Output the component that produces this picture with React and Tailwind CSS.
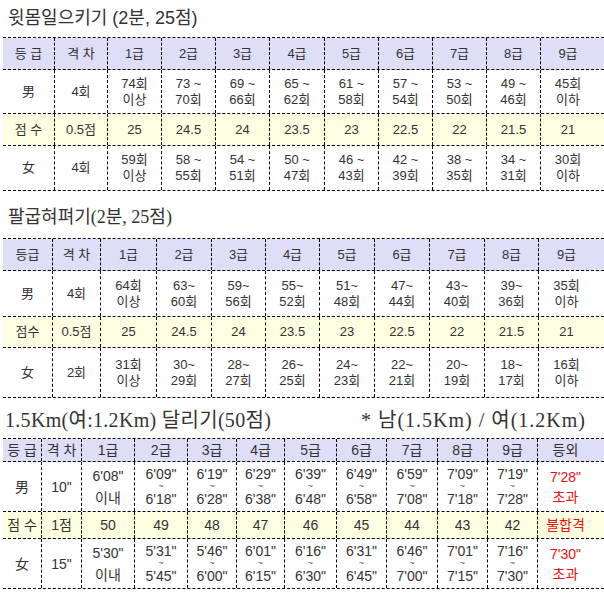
import React from 'react';

const HEAD_BG = 'bg-[#dedef7]';
const SCORE_BG = 'bg-[#fdfde2]';

// one cell: string, array of lines, or {lines, red, tilde}
const Cell = ({ value, last, big }) => {
    const v = typeof value === 'object' && !Array.isArray(value) ? value : { lines: value };
    const lines = Array.isArray(v.lines) ? v.lines : [v.lines];
    let lead = big ? 'leading-[22px]' : 'leading-[16px]';
    if (v.red) lead = 'leading-[20px]';

    return (
        <div
            className={
                'flex flex-col items-center justify-center text-center whitespace-nowrap ' +
                (last ? '' : 'border-r border-dashed border-black ') +
                (v.red ? 'text-[#f01010]' : 'text-[#333]')
            }
        >
            {v.tilde ? (
                <>
                    <span className="leading-[16px]">{lines[0]}</span>
                    <span className="leading-[9px] text-[9px] text-[#555]">~</span>
                    <span className="leading-[16px]">{lines[1]}</span>
                </>
            ) : (
                lines.map((l, i) => (
                    <span key={i} className={lead}>{l}</span>
                ))
            )}
        </div>
    );
};

const Table = ({ cols, rows, big }) => (
    <div className={'ml-[3px] border-t border-dashed border-black ' + (big ? 'text-[14px]' : 'text-[13px]')}>
        {rows.map((row, i) => (
            <div key={i} className={'grid border-b border-dashed border-black ' + cols + ' ' + row.h + ' ' + (row.bg || '')}>
                {row.cells.map((c, j) => (
                    <Cell key={j} value={c} last={j === row.cells.length - 1} big={big} />
                ))}
            </div>
        ))}
    </div>
);

const grades = ['1급', '2급', '3급', '4급', '5급', '6급', '7급', '8급', '9급'];

const situpRows = [
    { h: 'h-[32px]', bg: HEAD_BG, cells: ['등 급', '격 차', ...grades] },
    {
        h: 'h-[44px]',
        cells: ['男', '4회', ['74회', '이상'], ['73 ~', '70회'], ['69 ~', '66회'], ['65 ~', '62회'], ['61 ~', '58회'],
            ['57 ~', '54회'], ['53 ~', '50회'], ['49 ~', '46회'], ['45회', '이하']],
    },
    { h: 'h-[32px]', bg: SCORE_BG, cells: ['점 수', '0.5점', '25', '24.5', '24', '23.5', '23', '22.5', '22', '21.5', '21'] },
    {
        h: 'h-[45px]',
        cells: ['女', '4회', ['59회', '이상'], ['58 ~', '55회'], ['54 ~', '51회'], ['50 ~', '47회'], ['46 ~', '43회'],
            ['42 ~', '39회'], ['38 ~', '35회'], ['34 ~', '31회'], ['30회', '이하']],
    },
];

const pushupRows = [
    { h: 'h-[32px]', bg: HEAD_BG, cells: ['등급', '격 차', ...grades] },
    {
        h: 'h-[46px]',
        cells: ['男', '4회', ['64회', '이상'], ['63~', '60회'], ['59~', '56회'], ['55~', '52회'], ['51~', '48회'],
            ['47~', '44회'], ['43~', '40회'], ['39~', '36회'], ['35회', '이하']],
    },
    { h: 'h-[31px]', bg: SCORE_BG, cells: ['점수', '0.5점', '25', '24.5', '24', '23.5', '23', '22.5', '22', '21.5', '21'] },
    {
        h: 'h-[50px]',
        cells: ['女', '2회', ['31회', '이상'], ['30~', '29회'], ['28~', '27회'], ['26~', '25회'], ['24~', '23회'],
            ['22~', '21회'], ['20~', '19회'], ['18~', '17회'], ['16회', '이하']],
    },
];

const t = (a, b) => ({ lines: [a, b], tilde: true });

const runRows = [
    { h: 'h-[23px]', bg: HEAD_BG, cells: ['등 급', '격 차', ...grades, '등외'] },
    {
        h: 'h-[50px]',
        cells: ['男', '10"', ['6\'08"', '이내'], t('6\'09"', '6\'18"'), t('6\'19"', '6\'28"'), t('6\'29"', '6\'38"'),
            t('6\'39"', '6\'48"'), t('6\'49"', '6\'58"'), t('6\'59"', '7\'08"'), t('7\'09"', '7\'18"'),
            t('7\'19"', '7\'28"'), { lines: ['7\'28"', '초과'], red: true }],
    },
    {
        h: 'h-[27px]',
        bg: SCORE_BG,
        cells: ['점 수', '1점', '50', '49', '48', '47', '46', '45', '44', '43', '42', { lines: '불합격', red: true }],
    },
    {
        h: 'h-[50px]',
        cells: ['女', '15"', ['5\'30"', '이내'], t('5\'31"', '5\'45"'), t('5\'46"', '6\'00"'), t('6\'01"', '6\'15"'),
            t('6\'16"', '6\'30"'), t('6\'31"', '6\'45"'), t('6\'46"', '7\'00"'), t('7\'01"', '7\'15"'),
            t('7\'16"', '7\'30"'), { lines: ['7\'30"', '초과'], red: true }],
    },
];

export default function App() {
    return (
        <div className="w-[604px] h-[594px] bg-white overflow-hidden font-['Liberation_Sans','Noto_Sans_CJK_KR',sans-serif]">
            <div className="h-[37px] flex items-center pl-[8px] text-[18px] text-[#333]">
                윗몸일으키기 (2분, 25점)
            </div>
            <Table
                cols="grid-cols-[52px_53px_54px_54px_54px_55px_54px_54px_54px_54px_54px]"
                rows={situpRows}
            />

            <div className="h-[47px] flex items-center pt-[5px] pl-[8px] text-[18px] text-[#333] font-['Liberation_Serif','Noto_Sans_CJK_KR',serif]">
                팔굽혀펴기(2분, 25점)
            </div>
            <Table
                cols="grid-cols-[50px_48px_56px_55px_54px_54px_55px_55px_55px_54px_55px]"
                rows={pushupRows}
            />

            <div className="h-[40px] flex items-center justify-between pt-[4px] pl-[5px] pr-[18px] text-[20px] text-[#333] font-['Liberation_Serif','Noto_Sans_CJK_KR',serif]">
                <span className="tracking-[0.3px]">1.5Km(여:1.2Km) 달리기(50점)</span>
                <span className="tracking-[1px]">* 남(1.5Km) / 여(1.2Km)</span>
            </div>
            <Table
                big
                cols="grid-cols-[39px_40px_53px_53px_49px_48px_52px_50px_51px_50px_50px_55px]"
                rows={runRows}
            />
        </div>
    );
}
